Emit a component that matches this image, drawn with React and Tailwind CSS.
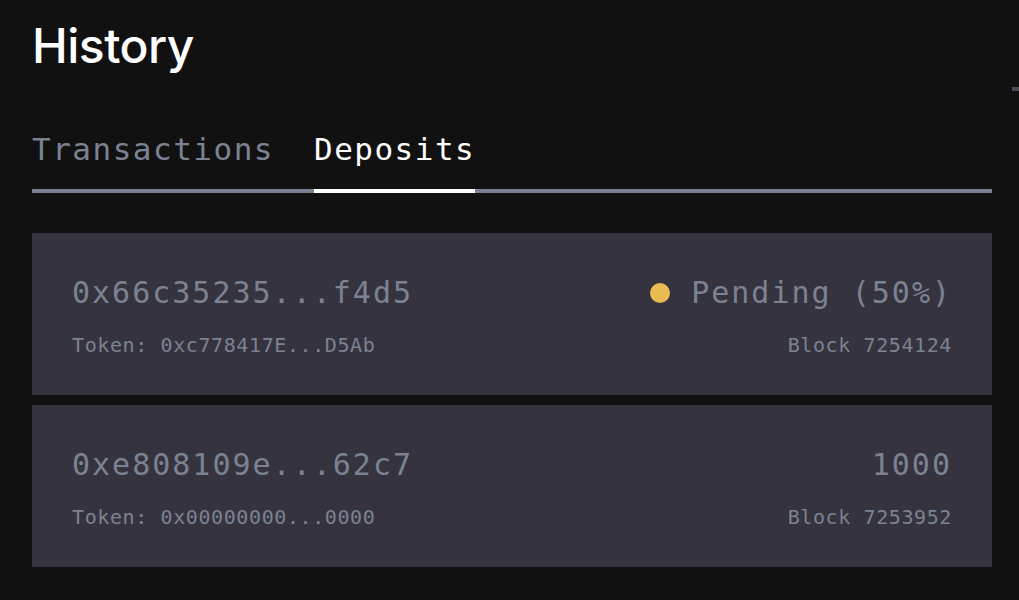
import React from 'react'

const deposits = [
  {
    hash: '0x66c35235...f4d5',
    token: '0xc778417E...D5Ab',
    block: '7254124',
    pending: 50,
  },
  {
    hash: '0xe808109e...62c7',
    token: '0x00000000...0000',
    block: '7253952',
    amount: '1000',
  },
]

function DepositCard({ d }) {
  return (
    <div className="bg-[#35343e] h-[162px] px-[40px] pt-[45px] text-[#7b8292] font-['DejaVu_Sans_Mono',monospace]">
      <div className="flex items-center justify-between text-[30px] leading-none tracking-[2px]">
        <span>{d.hash}</span>
        {d.pending != null ? (
          <span className="flex items-center">
            <span className="w-[20px] h-[20px] rounded-full bg-[#e9bb50] mr-[21px]" />
            Pending ({d.pending}%)
          </span>
        ) : (
          <span>{d.amount}</span>
        )}
      </div>
      <div className="flex justify-between mt-[27px] text-[20px] leading-none tracking-[0.6px]">
        <span>Token: {d.token}</span>
        <span>Block {d.block}</span>
      </div>
    </div>
  )
}

export default function App() {
  return (
    <div className="relative min-h-[600px] bg-[#111111] overflow-hidden">
      <div className="absolute right-0 top-[87px] w-[7px] h-[4px] bg-[#4a4a55]" />
      <div className="w-[960px] ml-[32px] pt-[22px]">
        <h1 className="text-white text-[48px] leading-none font-['Inter',sans-serif] font-medium tracking-[-0.5px]">
          History
        </h1>
        <div className="mt-[64px] flex gap-[40px] border-b-4 border-[#7b8292] font-['DejaVu_Sans_Mono',monospace] text-[31px] leading-none tracking-[1.5px]">
          <button className="text-[#7b8292] pb-[24px] -mb-1 border-b-4 border-transparent">
            Transactions
          </button>
          <button className="text-white pb-[24px] -mb-1 border-b-4 border-white">
            Deposits
          </button>
        </div>
        <div className="mt-[40px] flex flex-col gap-[10px]">
          {deposits.map(d => (
            <DepositCard key={d.hash} d={d} />
          ))}
        </div>
      </div>
    </div>
  )
}
